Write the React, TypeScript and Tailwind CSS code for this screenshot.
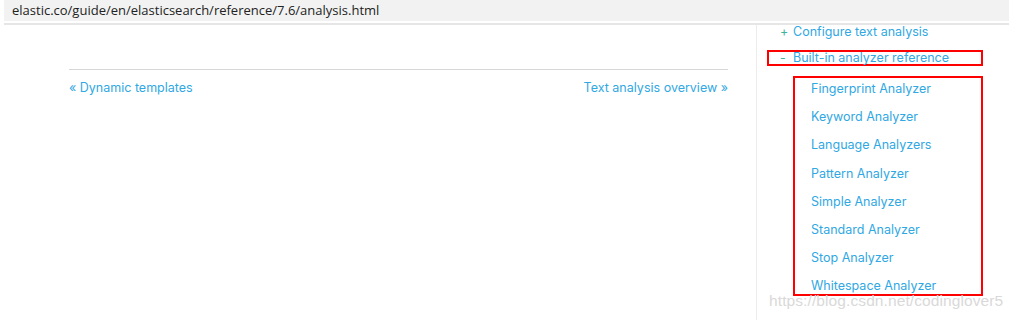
const ANALYZERS = [
  'Fingerprint Analyzer',
  'Keyword Analyzer',
  'Language Analyzers',
  'Pattern Analyzer',
  'Simple Analyzer',
  'Standard Analyzer',
  'Stop Analyzer',
  'Whitespace Analyzer',
];

export default function App() {
  return (
    <div className="relative w-[1009px] h-[320px] bg-white overflow-hidden font-['Inter',sans-serif]">
      {/* Address bar */}
      <div className="h-[21px] bg-[#f2f2f2] ml-[4px] pl-[8px] flex items-center">
        <span className="font-['Open_Sans',sans-serif] text-[13px] text-[#222] leading-none">
          elastic.co/guide/en/elasticsearch/reference/7.6/analysis.html
        </span>
      </div>
      <div className="h-[2px] ml-[4px] bg-[#e6e6e6] mt-[2px]" />

      <div className="flex">
        {/* Main content */}
        <div className="w-[756px] shrink-0 pl-[69px] pr-[28px]">
          <div className="mt-[44px] border-t border-[#d6d6d6]" />
          <div className="flex justify-between mt-[10px] text-[12.5px] leading-4 text-[#30a8e3]">
            <a href="#">« Dynamic templates</a>
            <a href="#">Text analysis overview »</a>
          </div>
        </div>

        {/* Sidebar */}
        <div className="flex-1 border-l border-[#ececec] h-[296px]">
          <div className="pl-[23px] mt-[-1px] flex items-center h-[16px] text-[12.5px] leading-4">
            <span className="w-[13px] text-[#3fb3a0]">+</span>
            <a href="#" className="text-[#30a8e3]">Configure text analysis</a>
          </div>
          <div className="ml-[10px] mt-[10px] w-[216px] h-[16px] border-2 border-[#f00] pl-[11px] flex items-center text-[12.5px] leading-4">
            <span className="w-[13px] text-[#3fb3a0]">-</span>
            <a href="#" className="text-[#30a8e3]">Built-in analyzer reference</a>
          </div>
          <div className="ml-[36px] mt-[10px] w-[190px] h-[220px] border-2 border-[#f00] pl-[16px] pt-[3px] flex flex-col gap-[12.2px] text-[12.5px] leading-4">
            {ANALYZERS.map((a) => (
              <a key={a} href="#" className="text-[#30a8e3]">{a}</a>
            ))}
          </div>
        </div>
      </div>

      {/* Watermark */}
      <div className="absolute left-[769px] top-[293px] font-['Liberation_Sans',sans-serif] text-[15.5px] leading-none text-[#d9d9d9] tracking-[0.1px]">
        https://blog.csdn.net/codinglover5
      </div>
    </div>
  );
}
